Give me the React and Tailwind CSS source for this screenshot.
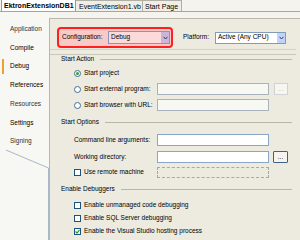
import React from "react";

const sideItems = ["Application", "Compile", "Debug", "References", "Resources", "Settings", "Signing"];

function Radio({ checked }) {
  return (
    <span className="relative w-[7px] h-[7px] rounded-full border border-[#3d6d99] bg-white shrink-0 flex items-center justify-center">
      {checked && <span className="w-[3px] h-[3px] rounded-full bg-[#2aa52a]" />}
    </span>
  );
}

function Check({ checked }) {
  return (
    <span className="w-[7px] h-[7px] border border-[#1c5180] bg-white shrink-0 flex items-center justify-center">
      {checked && (
        <svg width="5" height="5" viewBox="0 0 5 5">
          <path d="M0.5 2.5 L2 4 L4.5 0.8" stroke="#21a121" strokeWidth="1.2" fill="none" />
        </svg>
      )}
    </span>
  );
}

function Header({ children, mt }) {
  return (
    <div className={`flex items-center h-[8px] pl-[11px] pr-[8px] ${mt}`}>
      <span className="whitespace-nowrap">{children}</span>
      <span className="flex-1 h-px bg-[#b9b6a6] ml-[6px]" />
    </div>
  );
}

function Arrow({ bg }) {
  return (
    <span className={`w-[8px] h-full ${bg} flex items-center justify-center`}>
      <svg width="5" height="4" viewBox="0 0 5 4">
        <path d="M0.5 0.8 L2.5 3 L4.5 0.8" stroke="#2b3f6b" strokeWidth="1" fill="none" />
      </svg>
    </span>
  );
}

export default function App() {
  return (
    <div
      className="w-[300px] h-[240px] overflow-hidden bg-[#f4f3ee] text-black text-[6.5px] leading-none"
      style={{ fontFamily: '"Liberation Sans", Arial, sans-serif' }}
    >
      {/* document tabs */}
      <div className="h-[12px] flex items-end pl-px border-b border-[#a7a69c] text-[7px]">
        <div className="h-[12px] w-[75px] bg-white border border-b-0 border-[#9a9a90] flex items-center pl-[2px] font-bold">
          EktronExtensionDB1
        </div>
        <div className="h-[11px] w-[67px] bg-[#f0efe7] border-t border-r border-[#b0afa6] flex items-center pl-[3px]">
          EventExtension1.vb
        </div>
        <div className="h-[11px] w-[39px] bg-[#f0efe7] border-t border-r border-[#b0afa6] flex items-center pl-[2px]">
          Start Page
        </div>
      </div>

      <div className="flex h-[228px]">
        {/* side tabs */}
        <div className="relative w-[49px] bg-[#f7f7f4] pt-[8px]">
          {sideItems.map((s) => (
            <div key={s} className="relative h-[18.7px] flex items-center pl-[10px]">
              {s === "Debug" && <span className="absolute left-[2px] top-[2px] bottom-[2px] w-[2px] bg-[#f0a030]" />}
              <span className={s === "Application" || s === "Signing" || s === "Resources" ? "text-[#333]" : ""}>{s}</span>
            </div>
          ))}
          <svg className="absolute left-0 top-[136px]" width="50" height="92" viewBox="0 0 50 92">
            <path d="M6 2 L48.5 20 L48.5 92" stroke="#a9b8c8" strokeWidth="1" fill="none" />
          </svg>
        </div>

        {/* page content */}
        <div className="flex-1 mt-[6px] border-t border-l border-[#b8b7ac] bg-[#edebe0]">
          <div className="flex items-center mt-[8px]">
            <div className="ml-[7px] w-[116px] h-[21px] rounded-[4px] border-2 border-[#ff1f1f] bg-[#f8c9c7] flex items-center pl-[3px]">
              <span className="w-[46px]">Configuration:</span>
              <div className="w-[62px] h-[13px] border border-[#8a93b8] bg-[#fcdada] flex items-center">
                <span className="flex-1 pl-[2px]">Debug</span>
                <Arrow bg="bg-[#cbb5d9]" />
              </div>
            </div>
            <span className="ml-[10px] w-[32px]">Platform:</span>
            <div className="w-[71px] h-[12px] border border-[#7f9db9] bg-white flex items-center">
              <span className="flex-1 pl-[2px]">Active (Any CPU)</span>
              <Arrow bg="bg-[#c2d3fa]" />
            </div>
          </div>
          <div className="mt-[1px] mr-[4px] h-px bg-[#d4d2c4]" />
          <div className="mt-[4px] mr-[4px] h-px bg-[#c9c7b9]" />

          <Header mt="mt-0">Start Action</Header>

          <div className="flex items-center h-[10px] pl-[24px] mt-[5px] gap-[3px]">
            <Radio checked />
            <span>Start project</span>
          </div>
          <div className="flex items-center h-[12px] pl-[24px] mt-[5px]">
            <div className="w-[83px] flex items-center gap-[3px]">
              <Radio />
              <span>Start external program:</span>
            </div>
            <div className="w-[112px] h-[12px] border border-[#a8b3bd] bg-[#f8f8f3]" />
            <div className="ml-[5px] w-[14px] h-[12px] border border-[#cfd3d6] bg-[#f7f7f2] flex items-center justify-center text-[#c0c0c0]">...</div>
          </div>
          <div className="flex items-center h-[12px] pl-[24px] mt-[4px]">
            <div className="w-[83px] flex items-center gap-[3px]">
              <Radio />
              <span>Start browser with URL:</span>
            </div>
            <div className="w-[112px] h-[12px] border border-[#a8b3bd] bg-[#f8f8f3]" />
          </div>

          <Header mt="mt-[7px]">Start Options</Header>

          <div className="flex items-center h-[12px] pl-[24px] mt-[8px]">
            <span className="w-[83px]">Command line arguments:</span>
            <div className="w-[112px] h-[12px] border border-[#8aa6c6] bg-white" />
          </div>
          <div className="flex items-center h-[12px] pl-[24px] mt-[5px]">
            <span className="w-[83px]">Working directory:</span>
            <div className="w-[112px] h-[12px] border border-[#8aa6c6] bg-white" />
            <div className="ml-[4px] w-[15px] h-[12px] border border-[#3f6282] rounded-[1px] bg-[#f4f4ef] flex items-center justify-center">...</div>
          </div>
          <div className="flex items-center h-[12px] pl-[24px] mt-[3px]">
            <div className="w-[83px] flex items-center gap-[3px]">
              <Check />
              <span>Use remote machine</span>
            </div>
            <div className="w-[112px] h-[11px] border border-dashed border-[#a9a9a0]" />
          </div>

          <Header mt="mt-[7px]">Enable Debuggers</Header>

          <div className="flex items-center h-[10px] pl-[24px] mt-[7px] gap-[3px]">
            <Check />
            <span>Enable unmanaged code debugging</span>
          </div>
          <div className="flex items-center h-[10px] pl-[24px] mt-[3px] gap-[3px]">
            <Check />
            <span>Enable SQL Server debugging</span>
          </div>
          <div className="flex items-center h-[10px] pl-[24px] mt-[3px] gap-[3px]">
            <Check checked />
            <span>Enable the Visual Studio hosting process</span>
          </div>
        </div>
      </div>
    </div>
  );
}
